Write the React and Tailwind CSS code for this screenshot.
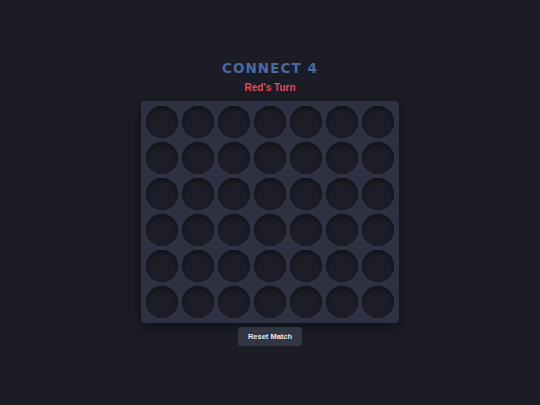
import React, { useState } from 'react';

const ROWS = 6;
const COLS = 7;

export default function App() {
    const [board, setBoard] = useState(() => Array.from({ length: ROWS }, () => Array(COLS).fill(null)));
    const [turn, setTurn] = useState('red');

    const drop = (col) => {
        const next = board.map((r) => [...r]);
        for (let r = ROWS - 1; r >= 0; r--) {
            if (!next[r][col]) {
                next[r][col] = turn;
                setBoard(next);
                setTurn(turn === 'red' ? 'yellow' : 'red');
                return;
            }
        }
    };

    const reset = () => {
        setBoard(Array.from({ length: ROWS }, () => Array(COLS).fill(null)));
        setTurn('red');
    };

    return (
        <div
            className="flex min-h-screen flex-col items-center justify-center bg-[#1b1c26] text-white"
            style={{ fontFamily: '"Liberation Sans", Arial, sans-serif' }}
        >
            <h1
                className="text-[13.5px] font-bold leading-[18px] tracking-[0.08em] text-[#4a69a1]"
                style={{ fontFamily: '"DejaVu Sans", Verdana, sans-serif' }}
            >
                CONNECT 4
            </h1>
            <p className="mt-[4px] text-[10px] font-bold leading-[14px] text-[#e5495a]">
                {turn === 'red' ? "Red's Turn" : "Yellow's Turn"}
            </p>
            <div className="mt-[6px] grid grid-cols-7 gap-[4px] rounded-[4px] bg-[#2e3141] p-[5px] shadow-[0_4px_12px_rgba(0,0,0,0.45)]">
                {board.map((row, r) =>
                    row.map((cell, c) => (
                        <button
                            key={`${r}-${c}`}
                            onClick={() => drop(c)}
                            className={
                                'h-[32px] w-[32px] rounded-full shadow-[inset_0_2px_4px_rgba(0,0,0,0.5)] ' +
                                (cell === 'red'
                                    ? 'bg-[#e5495a]'
                                    : cell === 'yellow'
                                    ? 'bg-[#f2c94c]'
                                    : 'bg-[#1c1d28]')
                            }
                        />
                    ))
                )}
            </div>
            <button
                onClick={reset}
                className="mt-[4px] h-[19px] rounded-[3px] bg-[#323544] px-[10px] text-[7.5px] font-bold text-[#e8e9ee]"
            >
                Reset Match
            </button>
        </div>
    );
}
